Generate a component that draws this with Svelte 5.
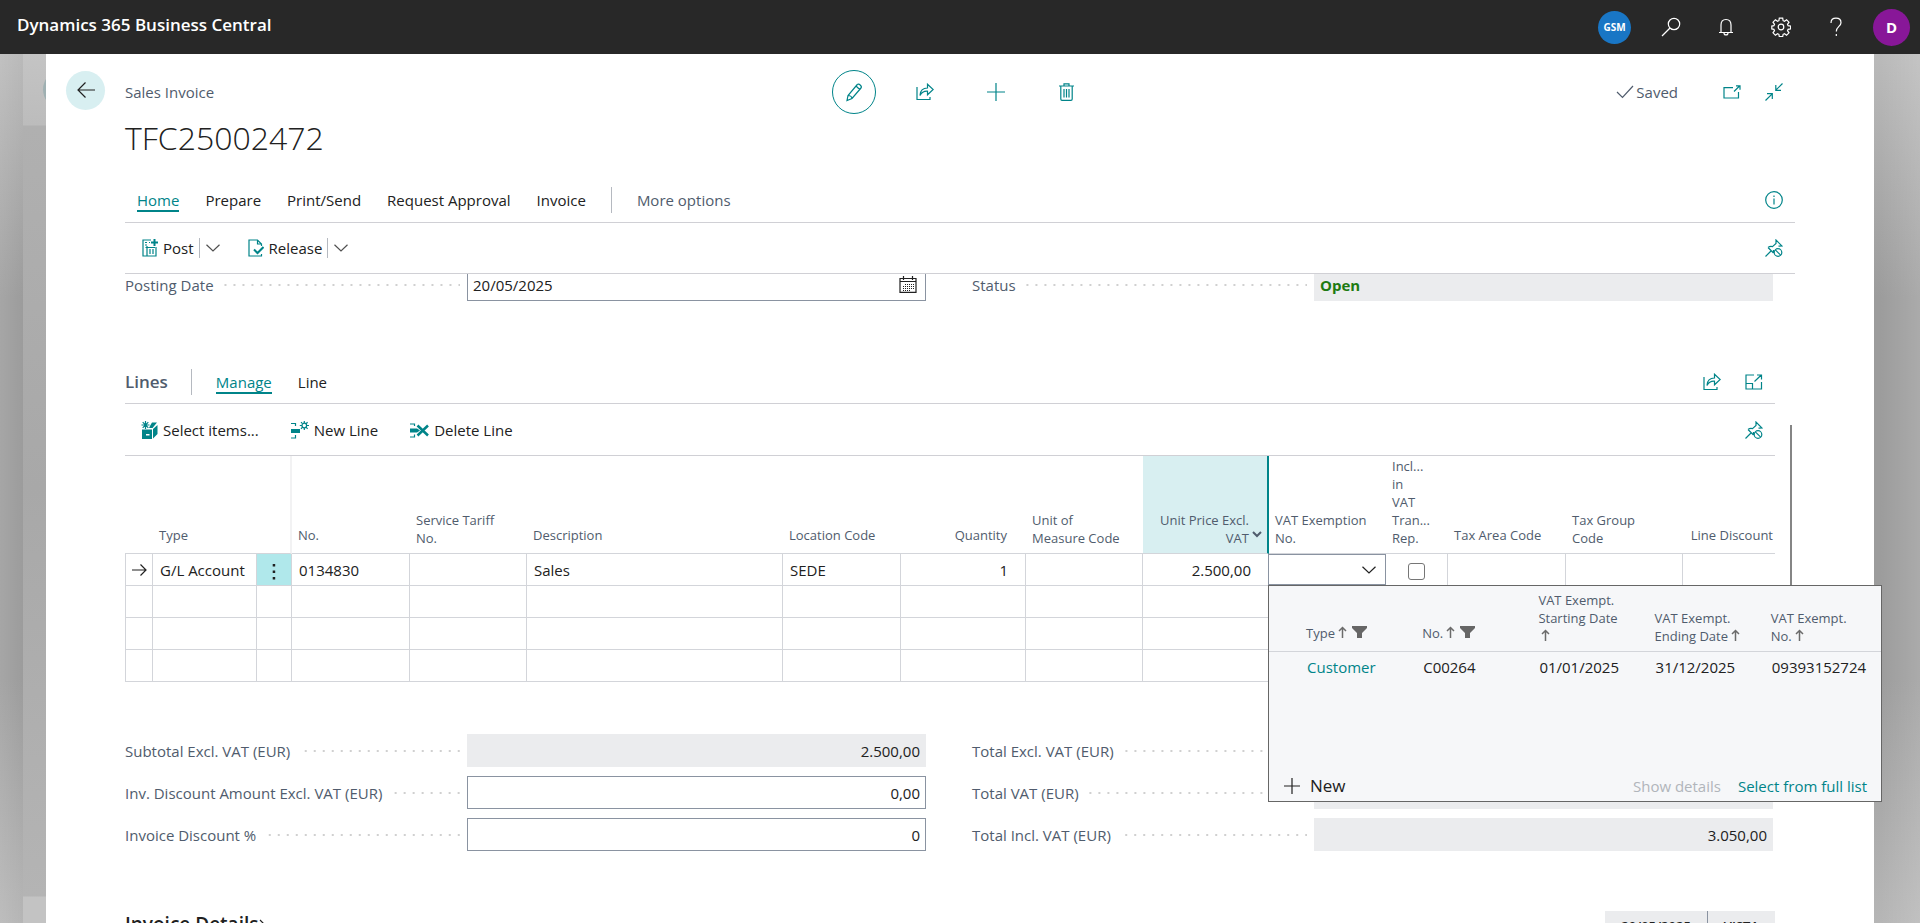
<script>
  let vatExempt = '';
  let inclInVat = false;
  let postingDate = '20/05/2025';

  const tabs = ['Home', 'Prepare', 'Print/Send', 'Request Approval', 'Invoice'];

  const columns = [
    { label: '', width: 28 },
    { label: 'Type', width: 104 },
    { label: '', width: 35, cls: 'freeze' },
    { label: 'No.', width: 118 },
    { label: 'Service Tariff\nNo.', width: 117 },
    { label: 'Description', width: 256 },
    { label: 'Location Code', width: 118 },
    { label: 'Quantity', width: 125, cls: 'num' },
    { label: 'Unit of\nMeasure Code', width: 117 },
    { label: 'Unit Price Excl.\nVAT', width: 126, cls: 'num sorted' },
    { label: 'VAT Exemption\nNo.', width: 117 },
    { label: 'Incl...\nin\nVAT\nTran...\nRep.', width: 62 },
    { label: 'Tax Area Code', width: 118 },
    { label: 'Tax Group\nCode', width: 117 },
    { label: 'Line Discount', cls: 'num last' }
  ];
  const emptyRows = [1, 2, 3];

  const lookupColumns = [
    { label: 'Type', filter: true },
    { label: 'No.', filter: true },
    { label: 'VAT Exempt.\nStarting Date\n' },
    { label: 'VAT Exempt.\nEnding Date' },
    { label: 'VAT Exempt.\nNo.' }
  ];

  const totals = [
    { id: 'subtotal', label: 'Subtotal Excl. VAT (EUR)', value: '2.500,00', readonly: true },
    { id: 'total-excl', label: 'Total Excl. VAT (EUR)', value: '2.500,00', readonly: true },
    { id: 'inv-disc', label: 'Inv. Discount Amount Excl. VAT (EUR)', value: '0,00' },
    { id: 'total-vat', label: 'Total VAT (EUR)', value: '550,00', readonly: true },
    { id: 'disc-pct', label: 'Invoice Discount %', value: '0' },
    { id: 'total-incl', label: 'Total Incl. VAT (EUR)', value: '3.050,00', readonly: true }
  ];
</script>

{#snippet share()}
  <svg width="18" height="18" viewBox="0 0 18 18"><path d="M1 4V16.500H14V14" /><path d="M4 12.500C4 7.500 7 5 11.500 5V1.200L17.200 6.500L11.500 11.800V8.200C8 8 5.500 9.500 4 12.500Z" /></svg>
{/snippet}

{#snippet pin()}
  <svg width="18" height="18" viewBox="0 0 18 18"><path d="M.5 17.500L6 12M3 8.500L8.500 14M3 8.500C4.500 7.300 6.500 7.200 7.500 7.600L11 4.500V1L17 7L13.500 7.200M8.500 14V11" /><circle cx="13" cy="13.500" r="3.800" /><path d="M10.300 10.800L15.700 16.200" /></svg>
{/snippet}

{#snippet chevron()}
  <svg width="14" height="8" viewBox="0 0 14 8"><path d="M.5 .7L7 7L13.500 .7" /></svg>
{/snippet}

{#snippet sortUp()}
  <svg class="sort" width="9" height="12" viewBox="0 0 9 12"><path d="M4.500 12V1.500M1 5L4.500 1.500L8 5" /></svg>
{/snippet}

<div class="app">
  <header class="topbar">
    <a class="brand" href="#home">Dynamics 365 Business Central</a>
    <div class="top-icons">
      <button class="env" aria-label="Environment GSM"><span>GSM</span></button>
      <button aria-label="Search">
        <svg width="20" height="20" viewBox="0 0 20 20"><circle cx="13" cy="7" r="5.700" /><path d="M9 11L1 19" /></svg>
      </button>
      <button aria-label="Notifications">
        <svg width="16" height="18" viewBox="0 0 16 18"><path d="M1 14.500H15M3 14.500V7C3 3.500 5 1.500 8 1.500S13 3.500 13 7V14.500M6 15C6 17.600 10 17.600 10 15" /></svg>
      </button>
      <button aria-label="Settings">
        <svg width="20" height="20" viewBox="0 0 20 20"><circle cx="10" cy="10" r="2.800" /><path d="M8.300 1.200h3.400l.4 2.500 1.400.6 2.100-1.500 2.400 2.400-1.500 2.100.6 1.400 2.500.4v2.800l-2.500.4-.6 1.400 1.500 2.100-2.400 2.400-2.100-1.500-1.400.6-.4 2.300H8.300l-.4-2.300-1.400-.6-2.100 1.500L2 15.800l1.500-2.100-.6-1.400L.8 11.900V9.100l2.100-.4.6-1.400L2 5.200l2.400-2.400 2.100 1.500 1.400-.6z" /></svg>
      </button>
      <button aria-label="Help">
        <svg width="12" height="20" viewBox="0 0 12 20"><path d="M1 6C1 3 3 1.200 6 1.200S11 3 11 5.700C11 9.500 6.300 9.500 6.300 14.500M6.300 17V19" /></svg>
      </button>
      <button class="me" aria-label="Account D"><span>D</span></button>
    </div>
  </header>

  <div class="stage">
    <div class="behind"><i class="ghost"></i></div>
    <main class="sheet">
      <div class="page-head">
        <div class="caption-row">
          <div class="left">
            <button class="back" aria-label="Back">
              <svg width="18" height="16" viewBox="0 0 18 16"><path d="M18 8H1M8.500 .5L1 8L8.500 15.500" /></svg>
            </button>
            <span class="caption">Sales Invoice</span>
          </div>
          <div class="tools">
            <button class="edit" aria-label="Edit">
              <svg width="18" height="20" viewBox="0 0 18 20"><path d="M2 18.500L3 13.500L12.300 2.500C13.500 1 17.500 4 16 6L7 16.500ZM3 13.500C5 13.500 6.800 15 7 16.500M11 4L14.700 7.500" /></svg>
            </button>
            <button aria-label="Share">{@render share()}</button>
            <button aria-label="New">
              <svg width="18" height="18" viewBox="0 0 18 18"><path d="M9 0V18M0 9H18" /></svg>
            </button>
            <button aria-label="Delete">
              <svg width="15" height="18" viewBox="0 0 15 18"><path d="M0 3H15M5 3V.8H10V3M1.800 3V16C1.800 17 2 17.400 3 17.400H12C13 17.400 13.200 17 13.200 16V3M5 6V14.500M7.500 6V14.500M10 6V14.500" /></svg>
            </button>
          </div>
          <div class="right">
            <span class="saved">
              <svg width="18" height="14" viewBox="0 0 18 14"><path d="M1 7L6.500 12.500L17 1" /></svg>Saved
            </span>
            <button class="popout" aria-label="Open in new window">
              <svg width="18" height="14" viewBox="0 0 18 14"><path d="M10 2.700H1V13H15.500V7M11 6.500L16.800 .8M13 .8H17V4.800" /></svg>
            </button>
            <button aria-label="Collapse">
              <svg width="18" height="18" viewBox="0 0 18 18"><path d="M17.500 .5L10.800 7.200M10.800 2V7.300H16M.5 17.500L7.200 10.800M2 10.700H7.300V16" /></svg>
            </button>
          </div>
        </div>
        <h1>TFC25002472</h1>

        <nav class="tabs">
          {#each tabs as tab, i}
            <button class:active={i === 0}>{tab}</button>
          {/each}
          <i class="rule"></i>
          <button class="more">More options</button>
          <button class="end" aria-label="Details">
            <svg width="18" height="18" viewBox="0 0 18 18"><circle cx="9" cy="9" r="8.300" /><path d="M9 7.500V13.500M9 4.500V6" /></svg>
          </button>
        </nav>

        <div class="actions">
          <button class="action">
            <svg width="16" height="18" viewBox="0 0 16 18"><path d="M9 1H1V17H14V8M5 7V17M8 10V15M11 10V15M3.500 8.500H13M3 3.500H5M7 3.500H8M3 6H5" /><path class="bold" d="M12.500 0V7M9 3.500H16" /></svg>Post
          </button>
          <i class="split"></i>
          <button class="drop" aria-label="More posting actions">{@render chevron()}</button>
          <button class="action second">
            <svg width="16" height="18" viewBox="0 0 16 18"><path d="M13.500 7V5L9.500 1H1V17H13.500V15M9.500 1V5H13.500" /><path class="bold" d="M6 10.500L9.500 14L15.500 8" /></svg>Release
          </button>
          <i class="split"></i>
          <button class="drop" aria-label="More release actions">{@render chevron()}</button>
          <button class="end" aria-label="Unpin">{@render pin()}</button>
        </div>
      </div>

      <div class="content">
        <div class="fields top">
          <div class="field">
            <label for="posting-date">Posting Date</label>
            <i class="dots"></i>
            <div class="box date">
              <input id="posting-date" bind:value={postingDate} />
              <button aria-label="Pick a date">
                <svg width="18" height="17" viewBox="0 0 18 17"><path d="M1 2.500H17V16.400H1ZM1 5.500H17M4.500 0V4M13.500 0V4" /><path class="dash" d="M6 8.500H15M4 10.500H15M4 12.500H15M4 14.500H12" /></svg>
              </button>
            </div>
          </div>
          <div class="field">
            <label for="status">Status</label>
            <i class="dots"></i>
            <input id="status" class="box ro status" value="Open" readonly />
          </div>
        </div>

        <section class="lines">
          <div class="lines-head">
            <h2>Lines</h2>
            <i class="rule"></i>
            <button class="active">Manage</button>
            <button>Line</button>
            <div class="end">
              <button aria-label="Share lines">{@render share()}</button>
              <button aria-label="Expand lines">
                <svg width="18" height="16" viewBox="0 0 18 16"><path d="M9 1H1V15H16.500V8M1 9.500H7.500V15M9.500 7.500L16 1.200M12 1H16.500V5.500" /></svg>
              </button>
            </div>
          </div>
          <div class="lines-actions">
            <button class="action">
              <svg width="17" height="18" viewBox="0 0 17 18"><path class="solid" d="M1 8.500H11V18H1ZM12 8L16.500 4V13L12 17.500ZM9.500 4L11 1.500H16L11.500 7H8Z" /><path class="white" d="M5 13H8.500V14.500H5Z" /><path d="M4.500 0V8M.5 4H8.500M1.700 1.200L7.300 6.800M7.300 1.200L1.700 6.800" /></svg>Select items...
            </button>
            <button class="action">
              <svg width="18" height="18" viewBox="0 0 18 18"><path d="M0 2.500H4.500V5M4.500 14V17H0" /><path class="solid" d="M0 8H9V12H0Z" /><circle cx="13.300" cy="4.500" r="2.300" /><path d="M13.300 0V2M13.300 7V9M8.800 4.500H11M15.700 4.500H18M10 1.200L11.500 2.700M15 6.200L16.600 7.800M16.600 1.200L15 2.700M11.500 6.200L10 7.800" /></svg>New Line
            </button>
            <button class="action">
              <svg width="19" height="18" viewBox="0 0 19 18"><path d="M0 3H4.500V5M4.500 13.500V16H0" /><path class="solid" d="M0 7.500H7L10 9.500L7 11.500H0Z" /><path class="cross" d="M7.500 4.500L18 14.500M18 4.500L7.500 14.500" /></svg>Delete Line
            </button>
            <button class="end" aria-label="Unpin lines actions">{@render pin()}</button>
          </div>

          <table class="grid">
            <colgroup>
              {#each columns as c}
                <col style={c.width ? `width:${c.width}px` : ''} />
              {/each}
            </colgroup>
            <thead>
              <tr>
                {#each columns as c}
                  <th class={c.cls ?? ''} class:multi={c.label.includes('\n')}>{c.label}{#if c.cls === 'num sorted'}<svg class="caret" width="10" height="7" viewBox="0 0 10 7"><path d="M1 1L5 5L9 1" /></svg>{/if}</th>
                {/each}
              </tr>
            </thead>
            <tbody>
              <tr>
                <td class="mark"><svg width="15" height="12" viewBox="0 0 15 12"><path d="M0 6H14M8.500 .5L14 6L8.500 11.500" /></svg></td>
                <td>G/L Account</td>
                <td class="menu"><button aria-label="Show more options"><svg width="4" height="17" viewBox="0 0 4 17"><path d="M.7 1h2.500v2.500H.7zM.7 7.500h2.500V10H.7zM.7 14h2.500v2.500H.7z" /></svg></button></td>
                <td>0134830</td>
                <td></td>
                <td>Sales</td>
                <td>SEDE</td>
                <td class="num">1</td>
                <td></td>
                <td class="num">2.500,00</td>
                <td class="lookup-cell">
                  <div class="combo">
                    <input aria-label="VAT Exemption No." bind:value={vatExempt} />
                    <button aria-label="Choose a value">{@render chevron()}</button>
                  </div>
                  <div class="lookup">
                    <table>
                      <thead>
                        <tr>
                          <th class="pad"></th>
                          {#each lookupColumns as c}
                            <th class:one={c.filter}>{c.label}{@render sortUp()}{#if c.filter}<svg class="funnel" width="15" height="12" viewBox="0 0 15 12"><path d="M0 0H15V2L10 7V12H5V7L0 2Z" /></svg>{/if}</th>
                          {/each}
                        </tr>
                      </thead>
                      <tbody>
                        <tr>
                          <td></td>
                          <td><a href="#customer">Customer</a></td>
                          <td>C00264</td>
                          <td>01/01/2025</td>
                          <td>31/12/2025</td>
                          <td>09393152724</td>
                        </tr>
                      </tbody>
                    </table>
                    <div class="lookup-foot">
                      <button class="new"><svg width="16" height="16" viewBox="0 0 16 16"><path d="M8 0V16M0 8H16" /></svg>New</button>
                      <button class="details" disabled>Show details</button>
                      <a href="#list">Select from full list</a>
                    </div>
                  </div>
                </td>
                <td class="check"><input type="checkbox" aria-label="Incl. in VAT Transac. Rep." bind:checked={inclInVat} /></td>
                <td></td>
                <td></td>
                <td class="last"></td>
              </tr>
              {#each emptyRows as row}
                <tr>
                  {#each columns as c}
                    <td class:last={c.cls === 'num last'}></td>
                  {/each}
                </tr>
              {/each}
            </tbody>
          </table>
          <div class="scrollbar"></div>
        </section>

        <div class="fields totals">
          {#each totals as t}
            <div class="field">
              <label for={t.id}>{t.label}</label>
              <i class="dots"></i>
              <input id={t.id} class="box amount" class:ro={t.readonly} value={t.value} readonly={t.readonly} />
            </div>
          {/each}
        </div>

        <section class="details-bar">
          <h3>Invoice Details
            <svg width="7" height="12" viewBox="0 0 7 12"><path d="M1 1L6 6L1 11" /></svg>
          </h3>
          <div class="summary">
            <span>20/05/2025</span>
            <span>VISTA</span>
          </div>
        </section>
      </div>
    </main>
  </div>
</div>

<style>
  :global(body) {
    margin: 0;
    overflow: hidden;
  }

  .app {
    height: 100vh;
    display: flex;
    flex-direction: column;
    overflow: hidden;
    font: 15px/20px "Open Sans", "Noto Sans", sans-serif;
    color: #212121;
  }

  button {
    display: inline-flex;
    align-items: center;
    justify-content: center;
    padding: 0;
    border: 0;
    background: none;
    font: inherit;
    color: inherit;
    white-space: nowrap;
  }

  a {
    color: #008489;
    text-decoration: none;
  }

  input {
    font: inherit;
    color: inherit;
    box-sizing: border-box;
    min-width: 0;
  }

  svg {
    fill: none;
    stroke: currentColor;
    stroke-width: 1.2;
    flex: none;
  }

  svg .bold { stroke-width: 2; }
  svg .cross { stroke-width: 2.500; }
  svg .solid { fill: currentColor; stroke: none; }
  svg .white { fill: #fff; stroke: none; }
  svg .dash { stroke-width: 1; stroke-dasharray: 1 1; }

  /* top bar */
  .topbar {
    display: flex;
    align-items: center;
    justify-content: space-between;
    height: 54px;
    flex: none;
    background: #282828;
    color: #fff;
  }

  .brand {
    padding: 0 0 4px 17px;
    font-size: 17px;
    font-weight: 600;
    color: #fff;
  }

  .top-icons {
    display: flex;
  }

  .top-icons button {
    width: 55px;
    height: 54px;
  }

  .top-icons .env,
  .top-icons .me {
    width: 57px;
  }

  .top-icons span {
    display: flex;
    align-items: center;
    justify-content: center;
    border-radius: 50%;
    font-weight: 700;
  }

  .env span {
    width: 33px;
    height: 33px;
    background: #1976c5;
    font-size: 10px;
  }

  .me span {
    width: 37px;
    height: 37px;
    background: #881798;
    font-size: 15px;
  }

  /* stacked pages */
  .stage {
    position: relative;
    flex: 1;
    min-height: 0;
    padding: 0 46px;
    background:
      linear-gradient(to right, rgba(255, 255, 255, .1), transparent 23px, transparent calc(100% - 40px), rgba(255, 255, 255, .15)),
      linear-gradient(to bottom, #bababa, #9c9c9c 28%, #9c9c9c 72%, #b6b6b6);
  }

  .behind {
    position: absolute;
    top: 0;
    bottom: 0;
    left: 23px;
    width: 23px;
    overflow: hidden;
    background: linear-gradient(to bottom, #c4c4c4, #bcbcbc 71px, #b0b0b0 72px, #a8a8a8 50%, #b4b4b4 842px, #c3c3c3 843px);
  }

  .ghost {
    position: absolute;
    top: 16px;
    left: 20px;
    width: 39px;
    height: 39px;
    border-radius: 50%;
    background: #9fb0b2;
  }

  .sheet {
    position: relative;
    height: 100%;
    background: #fff;
  }

  .page-head {
    position: relative;
    z-index: 2;
    background: #fff;
    padding-top: 16px;
  }

  .caption-row {
    display: grid;
    grid-template-columns: 1fr auto 1fr;
    align-items: center;
    padding: 0 20px;
  }

  .left {
    display: flex;
    gap: 20px;
    align-items: center;
  }

  .back {
    width: 39px;
    height: 39px;
    margin-bottom: 4px;
    border-radius: 50%;
    background: #d8eff1;
  }

  .caption,
  .saved {
    color: #505c6d;
  }

  .tools {
    display: flex;
    gap: 27px;
    color: #008489;
  }

  .tools button {
    width: 44px;
    height: 44px;
  }

  .tools .edit {
    box-sizing: border-box;
    border: 1px solid #008489;
    border-radius: 50%;
  }

  .right {
    display: flex;
    align-items: center;
    justify-content: flex-end;
    gap: 24px;
    padding-right: 71px;
    color: #008489;
  }

  .saved {
    display: flex;
    align-items: center;
    gap: 2px;
    margin-right: 21px;
  }

  h1 {
    margin: 2px 79px 0;
    font-size: 32px;
    line-height: 44px;
    font-weight: 300;
  }

  .tabs,
  .actions {
    display: flex;
    align-items: center;
    margin: 0 79px;
    border-bottom: 1px solid #d0d0d5;
  }

  .tabs {
    height: 44px;
    margin-top: 18px;
    padding-left: 12px;
    gap: 26px;
  }

  .tabs button,
  .lines-head button {
    border-bottom: 2px solid transparent;
    margin-top: 2px;
  }

  .tabs .active,
  .lines-head .active {
    color: #008489;
    border-color: #008489;
  }

  .rule {
    width: 1px;
    height: 26px;
    background: #b5b9c0;
  }

  .tabs .rule {
    margin: 0 -1px;
  }

  .tabs .more {
    color: #505c6d;
  }

  .sheet .end {
    margin-left: auto;
    color: #008489;
  }

  .tabs .end,
  .actions .end {
    margin-right: 12px;
  }

  .actions {
    height: 50px;
    padding-left: 17px;
  }

  .action {
    gap: 5px;
  }

  .action svg {
    color: #008489;
  }

  .split {
    width: 1px;
    height: 20px;
    margin: 0 6px 0 5px;
    background: #b5b9c0;
  }

  .drop {
    color: #505050;
  }

  .action.second {
    margin-left: 28px;
  }

  /* fast tabs */
  .content {
    padding: 0 99px 0 79px;
  }

  .fields {
    display: grid;
    grid-template-columns: 1fr 1fr;
    gap: 9px 46px;
    padding-right: 2px;
  }

  .fields.top {
    margin-top: -6px;
  }

  .field {
    display: grid;
    grid-template-columns: auto minmax(0, 1fr) 57.3%;
    align-items: center;
    height: 33px;
  }

  .field label {
    color: #505c6d;
  }

  .dots {
    height: 2px;
    margin: 0 7px 0 10px;
    background: linear-gradient(to right, transparent 7px, #d0d0d0 7px) right top / 9px 2px repeat-x;
  }

  .box {
    width: 100%;
    height: 33px;
    padding: 0 5px;
    border: 1px solid #8a93a1;
    border-radius: 0;
    background: #fff;
    box-sizing: border-box;
  }

  .box.ro {
    border-color: #ebecee;
    background: #ebecee;
  }

  .date {
    display: flex;
    align-items: center;
    padding-right: 8px;
  }

  .date input {
    flex: 1;
    padding: 0;
    border: 0;
    outline: 0;
  }

  .status {
    font-weight: 700;
    color: #1e7b12;
  }

  .amount {
    text-align: right;
  }

  .lines {
    position: relative;
    margin-top: 60px;
  }

  .lines-head {
    display: flex;
    align-items: center;
    height: 42px;
    border-bottom: 1px solid #d0d0d5;
  }

  h2 {
    margin: 0 23px 0 0;
    font-size: 17px;
    font-weight: 600;
    color: #505c6d;
  }

  .lines-head .rule {
    margin-right: 24px;
  }

  .lines-head > button {
    margin-right: 26px;
  }

  .lines-head .end {
    display: flex;
    gap: 24px;
    margin-right: 12px;
  }

  .lines-actions {
    display: flex;
    align-items: center;
    gap: 32px;
    height: 51px;
    padding: 0 12px 0 16px;
    border-bottom: 1px solid #d0d0d5;
  }

  table {
    table-layout: fixed;
    border-collapse: separate;
    border-spacing: 0;
  }

  .grid {
    width: 100%;
  }

  th {
    padding: 0 6px 6px;
    font-size: 13px;
    line-height: 24px;
    font-weight: 400;
    text-align: left;
    vertical-align: bottom;
    white-space: pre;
    color: #505c6d;
    border-bottom: 1px solid #d3d5da;
  }

  th.multi {
    line-height: 18px;
  }

  .grid > thead th {
    height: 91px;
  }

  th.freeze {
    border-right: 2px solid #f2f2f3;
  }

  .grid .num {
    text-align: right;
    padding-right: 19px;
  }

  .grid .num.sorted {
    padding-right: 18px;
  }

  .grid .num.last {
    padding-right: 2px;
  }

  th.sorted {
    position: relative;
    background: #d8eff1;
    border-right: 2px solid #008489;
  }

  .caret {
    position: absolute;
    right: 5px;
    bottom: 15px;
    stroke-width: 2;
  }

  .grid > tbody > tr > td {
    height: 31px;
    padding: 0 7px;
    border-right: 1px solid #d3d5da;
    border-bottom: 1px solid #d3d5da;
    white-space: nowrap;
  }

  .grid > tbody > tr > td:first-child {
    border-left: 1px solid #d3d5da;
  }

  .grid > tbody > tr > td.num {
    padding-right: 17px;
  }

  .grid > tbody > tr > td.last {
    border-right: 0;
  }

  .grid > tbody > tr > td.mark,
  .grid > tbody > tr > td.menu,
  .grid > tbody > tr > td.check {
    padding: 0;
    text-align: center;
  }

  .grid .menu {
    background: #b0e8eb;
  }

  .menu button {
    vertical-align: middle;
  }

  .menu svg {
    fill: #212121;
    stroke: none;
  }

  .check input {
    appearance: none;
    width: 17px;
    height: 17px;
    margin: 0;
    border: 1px solid #767676;
    border-radius: 3px;
    vertical-align: middle;
  }

  .grid > tbody > tr > td.lookup-cell {
    position: relative;
    padding: 0;
  }

  .combo {
    display: flex;
    align-items: center;
    box-sizing: border-box;
    height: 31px;
    margin: 0 -1px;
    padding: 0 9px 0 5px;
    border: 1px solid #8a93a1;
  }

  .combo input {
    flex: 1;
    width: 0;
    border: 0;
    outline: 0;
  }

  /* lookup drop-down */
  .lookup {
    position: absolute;
    z-index: 5;
    top: 100%;
    left: -1px;
    display: flex;
    flex-direction: column;
    box-sizing: border-box;
    width: 614px;
    height: 217px;
    border: 1px solid #666;
    background: #f6f7f9;
  }

  .lookup table {
    width: 100%;
  }

  .lookup th {
    height: 59px;
    line-height: 18px;
    padding: 0 0 6px 6px;
  }

  .lookup th.one {
    line-height: 24px;
  }

  .lookup .pad {
    width: 25px;
  }

  .lookup td {
    height: 30px;
    padding: 0 0 0 7px;
  }

  .sort {
    margin-left: 3px;
    color: #6b6b6b;
    stroke-width: 1.5;
  }

  .funnel {
    margin-left: 5px;
    fill: #666;
    stroke: none;
  }

  .lookup-foot {
    display: flex;
    align-items: center;
    gap: 17px;
    margin-top: auto;
    padding: 0 14px 3px 15px;
  }

  .new {
    gap: 10px;
    margin-right: auto;
    font-size: 17px;
    line-height: 24px;
  }

  .details {
    color: #b1b5bb;
  }

  .scrollbar {
    position: absolute;
    top: 64px;
    right: -17px;
    width: 2px;
    height: 300px;
    background: #858585;
  }

  .totals {
    margin-top: 52px;
  }

  .details-bar {
    display: flex;
    align-items: flex-start;
    justify-content: space-between;
    margin-top: 60px;
  }

  h3 {
    margin: 0;
    font-size: 19px;
    line-height: 26px;
    font-weight: 600;
  }

  h3 svg {
    margin-left: -4px;
  }

  .summary {
    display: flex;
    background: #ebecee;
    font-size: 13px;
    line-height: 30px;
  }

  .summary span {
    padding: 0 16px;
    font-weight: 600;
  }

  .summary span + span {
    border-left: 1px solid #8a93a1;
  }
</style>
